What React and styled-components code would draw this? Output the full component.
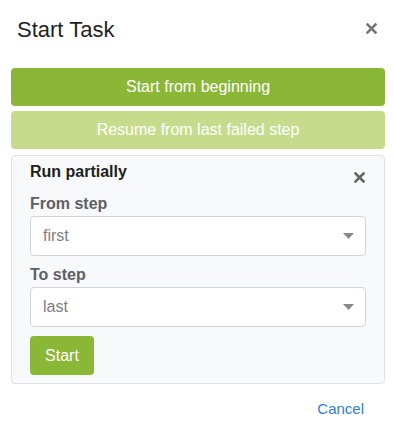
import React from 'react'
import styled, { createGlobalStyle } from 'styled-components'

const GlobalStyle = createGlobalStyle`
  body {
    margin: 0;
    background: #fff;
    font-family: "Liberation Sans", Arial, sans-serif;
  }
`

const CloseIcon = ({ size = 11, color = '#777' }) => (
  <svg width={size} height={size} viewBox="0 0 11 11">
    <path d="M1.5 1.5 L9.5 9.5 M9.5 1.5 L1.5 9.5" stroke={color} strokeWidth="2.6" strokeLinecap="square" />
  </svg>
)

const Caret = () => (
  <svg width="11" height="6" viewBox="0 0 11 6">
    <path d="M0 0 H11 L5.5 6 Z" fill="#888" />
  </svg>
)

const App = () => {
  return (
    <>
      <GlobalStyle />
      <Modal>
        <Header>
          <Title>Start Task</Title>
          <HeaderClose><CloseIcon /></HeaderClose>
        </Header>
        <Actions>
          <ActionButton>Start from beginning</ActionButton>
          <ActionButton light>Resume from last failed step</ActionButton>
          <Panel>
            <PanelHeader>
              <PanelTitle>Run partially</PanelTitle>
              <PanelClose><CloseIcon color="#666" /></PanelClose>
            </PanelHeader>
            <Field first>
              <Label>From step</Label>
              <Select>
                <span>first</span>
                <Caret />
              </Select>
            </Field>
            <Field>
              <Label>To step</Label>
              <Select>
                <span>last</span>
                <Caret />
              </Select>
            </Field>
            <StartButton>Start</StartButton>
          </Panel>
        </Actions>
        <Footer>
          <CancelLink>Cancel</CancelLink>
        </Footer>
      </Modal>
    </>
  )
}

export default App

const Modal = styled.div`
  width: 394px;
  height: 426px;
  box-sizing: border-box;
  background: #fff;
`

const Header = styled.div`
  display: flex;
  justify-content: space-between;
  align-items: flex-start;
  padding: 17px 17px 0 17px;
`

const Title = styled.h1`
  margin: 0;
  font-size: 22px;
  line-height: 26px;
  font-weight: normal;
  color: #1f1f1f;
`

const HeaderClose = styled.div`
  margin-top: 6px;
  display: flex;
`

const Actions = styled.div`
  display: flex;
  flex-direction: column;
  gap: 5px;
  margin: 25px 9px 0 11px;
`

const ActionButton = styled.div`
  height: 38px;
  display: flex;
  align-items: center;
  justify-content: center;
  border-radius: 4px;
  background: ${p => (p.light ? '#c6dc8c' : '#8bb737')};
  color: #fff;
  font-size: 16px;
`

const Panel = styled.div`
  margin-top: 1px;
  border: 1px solid #dfe2e5;
  border-radius: 4px;
  background: #f8f9fa;
  padding: 4px 18px 8px;
`

const PanelHeader = styled.div`
  display: flex;
  justify-content: space-between;
  align-items: flex-start;
  height: 22px;
`

const PanelTitle = styled.div`
  margin-top: 2px;
  font-size: 16px;
  line-height: 20px;
  font-weight: bold;
  color: #1d1f21;
`

const PanelClose = styled.div`
  display: flex;
  margin-top: 12px;
  margin-right: 1px;
`

const Field = styled.div`
  margin-top: ${p => (p.first ? '12px' : '9px')};
`

const Label = styled.div`
  font-size: 16px;
  line-height: 20px;
  font-weight: bold;
  color: #5b6068;
  margin-bottom: 2px;
`

const Select = styled.div`
  height: 40px;
  box-sizing: border-box;
  border: 1px solid #ced4da;
  border-radius: 4px;
  background: #fff;
  display: flex;
  align-items: center;
  justify-content: space-between;
  padding: 0 11px 0 12px;
  font-size: 16px;
  color: #7b7f84;
`

const StartButton = styled.div`
  margin-top: 9px;
  width: 64px;
  height: 39px;
  box-sizing: border-box;
  display: flex;
  align-items: center;
  justify-content: center;
  border-radius: 4px;
  background: #8bb737;
  color: #fff;
  font-size: 16px;
`

const Footer = styled.div`
  display: flex;
  justify-content: flex-end;
  padding: 15px 30px 0 0;
`

const CancelLink = styled.a`
  font-size: 15px;
  line-height: 19px;
  color: #2f7fd6;
  cursor: pointer;
`
